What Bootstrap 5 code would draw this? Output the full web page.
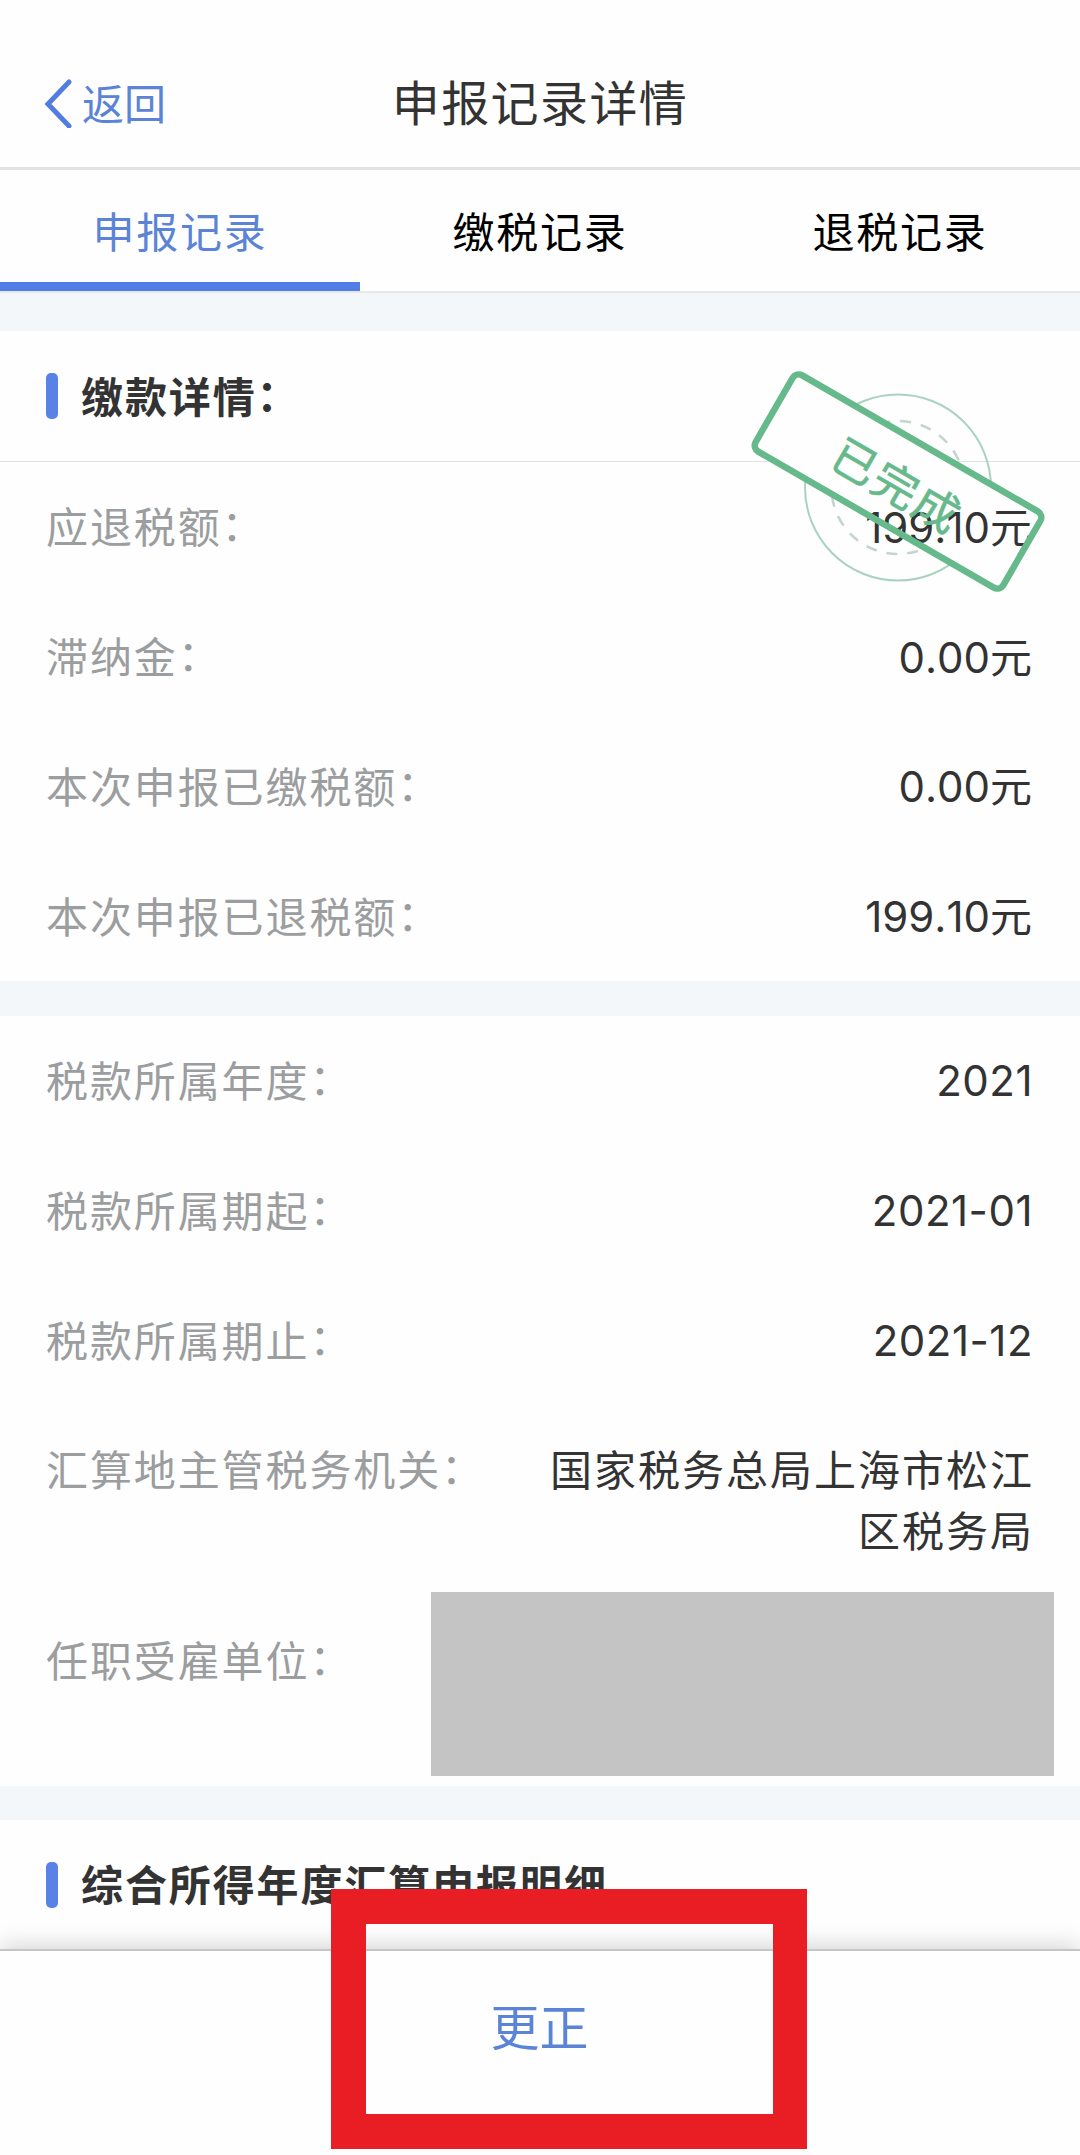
<!DOCTYPE html>
<html lang="zh-CN">
<head>
<meta charset="utf-8">
<meta name="viewport" content="width=device-width, initial-scale=1">
<title>申报记录详情</title>
<link href="https://cdn.jsdelivr.net/npm/bootstrap@5.3.0/dist/css/bootstrap.min.css" rel="stylesheet">
<style>
  body { font-family: Inter, "Noto Sans CJK SC", sans-serif; font-size: 42px; line-height: 61px; color: #333; background: #fefefe; }
  .phone { width: 1080px; height: 2155px; overflow: hidden; background: #fefefe; }
  .cjk { font-family: "Noto Sans CJK SC", sans-serif; }
  .topbar { height: 170px; padding: 38px 44px 0; border-bottom: 3px solid #e2e2e2; }
  .topbar .cjk { padding-bottom: 2px; }
  .back { color: #5b84d6; font-size: 42px; gap: 10px; width: 240px; }
  .page-title { font-size: 48px; letter-spacing: 1.4px; color: #333; padding-bottom: 4px !important; }
  .tabs { height: 123px; border-bottom: 2px solid #e7e9ea; }
  .tabs .nav-link { color: #000; font-size: 42px; letter-spacing: 1.7px; border-radius: 0; padding: 7px 0 0; border-bottom: 9px solid transparent; }
  .tabs .nav-link.active { color: #5b84d6; border-bottom-color: #527de4; }
  .band { background: #f4f7fa; flex: none; }
  .sec-head { padding: 0 46px; gap: 23px; letter-spacing: 1.9px; color: #333; }
  .sec-head .cjk { padding-bottom: 4px; }
  .sec-bar { width: 12px; height: 46px; border-radius: 5px; background: #5882e6; }
  .item { height: 129.8px; padding: 0 47px 0 46px; }
  .item-label { color: #9b9d9f; letter-spacing: 1.9px; padding-bottom: 4px; white-space: nowrap; }
  .colon { display: inline-block; line-height: 1; transform: translateY(-2px); }
  .item-value { color: #333; text-align: right; letter-spacing: .5px; white-space: nowrap; }
  .money { font-kerning: none; letter-spacing: 0; padding-bottom: 2px; }
  .item-value .cjk { letter-spacing: 2px; margin-right: -1px; }
  .mask { width: 623px; height: 184px; background: #c4c4c4; margin-right: 26px; }
  .stamp { left: 740px; top: 360px; width: 316px; height: 242px; }
  .actions { height: 206px; border-top: 2px solid #c6c6c6; box-shadow: 0 -4px 22px rgba(0,0,0,.16); background: #fefefe; }
  .fix-btn { color: #5b84d6; font-size: 49px; line-height: 60px; margin: 44px 1px 0 0; }
  .frame { left: 331px; top: 1889px; width: 476px; height: 260px; border: solid #e91d24; border-width: 35px 34px 35px 35px; }
</style>
</head>
<body>
<main class="phone position-relative d-flex flex-column">
  <header class="topbar d-flex align-items-center justify-content-between flex-shrink-0">
    <a class="back d-flex align-items-center text-decoration-none" href="#">
      <svg width="28" height="50" viewBox="0 0 28 50" fill="none" stroke="#527de0" stroke-width="5"><path d="M25 4 4 26 25 48" stroke-linecap="round"/></svg>
      <span class="cjk">返回</span>
    </a>
    <div class="page-title cjk">申报记录详情</div>
    <div class="back"></div>
  </header>

  <nav class="tabs nav nav-justified cjk flex-shrink-0">
    <a class="nav-link active d-flex align-items-center justify-content-center" href="#">申报记录</a>
    <a class="nav-link d-flex align-items-center justify-content-center" href="#">缴税记录</a>
    <a class="nav-link d-flex align-items-center justify-content-center" href="#">退税记录</a>
  </nav>
  <div class="band" style="height:38px"></div>

  <section class="flex-shrink-0" style="height:650px">
    <div class="sec-head d-flex align-items-center fw-bold border-bottom" style="height:131px">
      <span class="sec-bar"></span><span class="cjk">缴款详情<span class="colon">：</span></span>
    </div>
    <div class="item d-flex align-items-center justify-content-between"><span class="item-label cjk">应退税额<span class="colon">：</span></span><span class="item-value money position-relative z-1">199.10<span class="cjk">元</span></span></div>
    <div class="item d-flex align-items-center justify-content-between"><span class="item-label cjk">滞纳金<span class="colon">：</span></span><span class="item-value money">0.00<span class="cjk">元</span></span></div>
    <div class="item d-flex align-items-center justify-content-between"><span class="item-label cjk">本次申报已缴税额<span class="colon">：</span></span><span class="item-value money">0.00<span class="cjk">元</span></span></div>
    <div class="item d-flex align-items-center justify-content-between"><span class="item-label cjk">本次申报已退税额<span class="colon">：</span></span><span class="item-value money">199.10<span class="cjk">元</span></span></div>
  </section>
  <div class="band" style="height:35px"></div>

  <section class="flex-shrink-0" style="height:770px">
    <div class="item d-flex align-items-center justify-content-between"><span class="item-label cjk">税款所属年度<span class="colon">：</span></span><span class="item-value">2021</span></div>
    <div class="item d-flex align-items-center justify-content-between"><span class="item-label cjk">税款所属期起<span class="colon">：</span></span><span class="item-value">2021-01</span></div>
    <div class="item d-flex align-items-center justify-content-between"><span class="item-label cjk">税款所属期止<span class="colon">：</span></span><span class="item-value">2021-12</span></div>
    <div class="item d-flex justify-content-between h-auto" style="padding-top:32px"><span class="item-label cjk">汇算地主管税务机关<span class="colon">：</span></span><span class="item-value"><span class="cjk d-block">国家税务总局上海市松江<br>区税务局</span></span></div>
    <div class="item d-flex justify-content-between h-auto pe-0" style="margin-top:33px"><span class="item-label cjk" style="padding-top:36px">任职受雇单位<span class="colon">：</span></span><div class="mask"></div></div>
  </section>
  <div class="band" style="height:34px"></div>

  <section class="flex-shrink-0" style="height:129px">
    <div class="sec-head d-flex align-items-center fw-bold h-100">
      <span class="sec-bar"></span><span class="cjk">综合所得年度汇算申报明细</span>
    </div>
  </section>

  <footer class="actions d-flex align-items-start justify-content-center flex-shrink-0 position-relative">
    <a class="fix-btn cjk text-decoration-none" href="#">更正</a>
  </footer>

  <svg class="stamp position-absolute" viewBox="740 360 316 242">
    <circle cx="898" cy="487.500" r="93" fill="none" stroke="#a9d3c0" stroke-width="2"/>
    <circle cx="898" cy="487.500" r="66.500" fill="none" stroke="#c5d5cd" stroke-width="2.500" stroke-dasharray="11 10"/>
    <rect x="755" y="437.500" width="286" height="88" rx="7" fill="#fefefe" transform="rotate(30 898 481.500)"/>
  </svg>
  <svg class="stamp position-absolute z-2" viewBox="740 360 316 242">
    <g transform="rotate(30 898 481.500)">
      <rect x="755" y="437.500" width="286" height="88" rx="7" fill="none" stroke="#66b98b" stroke-width="6.500"/>
      <text class="cjk" x="899" y="502.500" font-size="45" font-weight="400" letter-spacing="2" text-anchor="middle" fill="#66b98b" stroke="#66b98b" stroke-width=".6">已完成</text>
    </g>
  </svg>
  <div class="frame position-absolute z-3"></div>
</main>
<script src="https://cdn.jsdelivr.net/npm/bootstrap@5.3.0/dist/js/bootstrap.bundle.min.js"></script>
</body>
</html>
